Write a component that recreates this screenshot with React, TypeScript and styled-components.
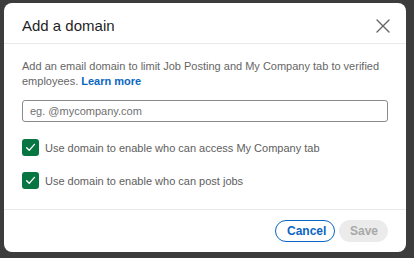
import React from "react";
import styled, { createGlobalStyle } from "styled-components";

const Global = createGlobalStyle`
  html, body { margin: 0; padding: 0; }
  body {
    background: #3c3c3c;
    font-family: "Liberation Sans", Arial, sans-serif;
    width: 414px;
    height: 258px;
    overflow: hidden;
  }
`;

const Backdrop = styled.div`
  box-sizing: border-box;
  width: 414px;
  height: 258px;
  padding: 3px 8px 6px 4px;
  display: flex;
`;

const Modal = styled.div`
  flex: 1;
  background: #fff;
  border-radius: 8px;
  display: flex;
  flex-direction: column;
  overflow: hidden;
`;

const Header = styled.div`
  height: 41px;
  box-sizing: border-box;
  display: flex;
  align-items: center;
  justify-content: space-between;
  padding: 5px 12px 0 18px;
  border-bottom: 1px solid #e9e9e9;
`;

const Title = styled.h2`
  margin: 0;
  font-size: 15px;
  font-weight: 400;
  color: #1f1f1f;
`;

const CloseButton = styled.button`
  border: 0;
  background: none;
  padding: 0;
  width: 22px;
  height: 22px;
  display: flex;
  align-items: center;
  justify-content: center;
  color: #666;
`;

const Body = styled.div`
  flex: 1;
  padding: 15px 18px 0 18px;
  display: flex;
  flex-direction: column;
  border-bottom: 1px solid #e9e9e9;
`;

const Description = styled.p`
  margin: 0;
  font-size: 11px;
  line-height: 15px;
  color: #666;
`;

const Link = styled.a`
  margin-left: 3px;
  color: #0a66c2;
  font-weight: 700;
  text-decoration: none;
`;

const Input = styled.input`
  margin-top: 11px;
  box-sizing: border-box;
  height: 22px;
  width: 100%;
  border: 1px solid #8a8a8a;
  border-radius: 3px;
  padding: 0 7px;
  font-family: inherit;
  font-size: 11px;
  color: #333;
  outline: none;
  &::placeholder { color: #707070; }
`;

const Options = styled.div`
  margin-top: 17px;
  display: flex;
  flex-direction: column;
  gap: 16px;
`;

const Option = styled.label`
  display: flex;
  align-items: center;
  gap: 6px;
  font-size: 11px;
  color: #5e5e5e;
`;

const Box = styled.span`
  width: 17px;
  height: 17px;
  border-radius: 3px;
  background: #057642;
  display: flex;
  align-items: center;
  justify-content: center;
  flex: none;
`;

const Footer = styled.div`
  height: 42px;
  box-sizing: border-box;
  display: flex;
  align-items: center;
  justify-content: flex-end;
  gap: 4px;
  padding: 0 18px 0 0;
`;

const Button = styled.button<{ $variant: "outline" | "disabled" }>`
  height: 22px;
  box-sizing: border-box;
  border-radius: 11px;
  font-family: inherit;
  font-size: 12px;
  font-weight: 700;
  padding: 0 11px;
  ${(p) =>
    p.$variant === "outline"
      ? `border: 1px solid #0a66c2; color: #0a66c2; background: #fff; width: 60px;`
      : `border: 0; color: #a8a8a8; background: #ebebeb; width: 49px;`}
`;

const Check = () => (
  <svg width="11" height="11" viewBox="0 0 12 12" fill="none">
    <path d="M1.8 6.3 L4.6 9.1 L10.3 2.6" stroke="#fff" strokeWidth="1.5" strokeLinecap="round" strokeLinejoin="round" />
  </svg>
);

export default function App() {
  return (
    <>
      <Global />
      <Backdrop>
        <Modal>
          <Header>
            <Title>Add a domain</Title>
            <CloseButton aria-label="Close">
              <svg width="14" height="14" viewBox="0 0 14 14">
                <path d="M1 1 L13 13 M13 1 L1 13" stroke="currentColor" strokeWidth="1.4" strokeLinecap="round" />
              </svg>
            </CloseButton>
          </Header>
          <Body>
            <Description>
              <span>Add an email domain to limit Job Posting and My Company tab to verified employees.</span>
              <Link href="#">Learn more</Link>
            </Description>
            <Input placeholder="eg. @mycompany.com" />
            <Options>
              <Option>
                <Box><Check /></Box>
                Use domain to enable who can access My Company tab
              </Option>
              <Option>
                <Box><Check /></Box>
                Use domain to enable who can post jobs
              </Option>
            </Options>
          </Body>
          <Footer>
            <Button $variant="outline">Cancel</Button>
            <Button $variant="disabled">Save</Button>
          </Footer>
        </Modal>
      </Backdrop>
    </>
  );
}
